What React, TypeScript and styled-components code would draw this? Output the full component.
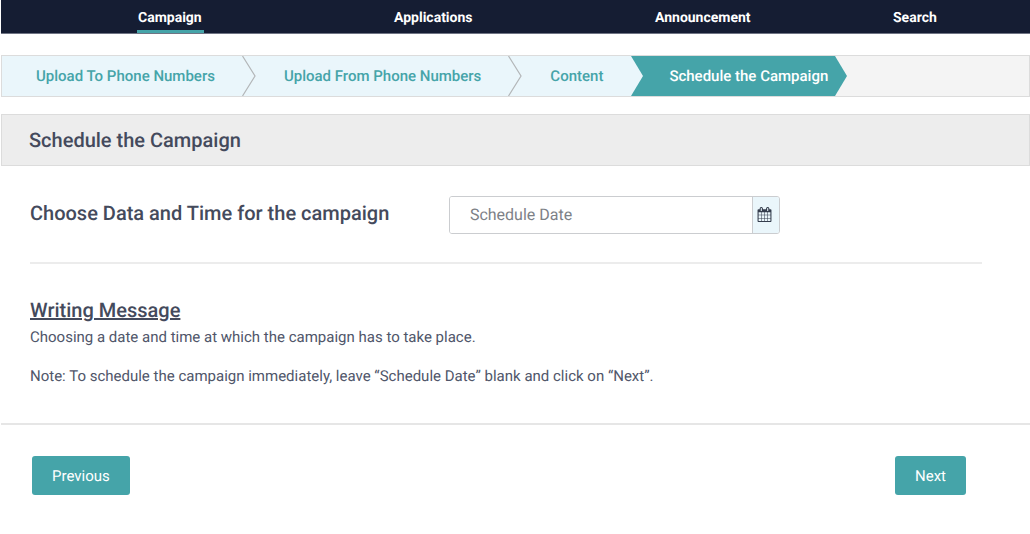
import React from "react";
import styled, { createGlobalStyle } from "styled-components";

const color = {
  navy: "#151d33",
  teal: "#45a4a9",
  ice: "#eaf6fb",
  ink: "#444a5c",
  line: "#dcdcdc",
};

const GlobalStyle = createGlobalStyle`
  *, *::before, *::after { box-sizing: border-box; }
  body {
    margin: 0;
    background: #fff;
    color: ${color.ink};
    font-family: Roboto, "Liberation Sans", sans-serif;
    text-rendering: geometricPrecision;
  }
  button, input { text-rendering: inherit; }
  h1, h2, p { margin: 0; }
`;

const Page = styled.div`
  padding-left: 1px;
`;

const Nav = styled.nav`
  display: grid;
  grid-template-columns: 256fr 261fr 238fr 138fr;
  padding-left: 136px;
  background: ${color.navy};
  border-bottom: 1px solid #6f7484;
`;

const NavLink = styled.a<{ $active?: boolean }>`
  justify-self: start;
  height: 33px;
  padding: 0 2px 0 1px;
  border-bottom: 3px solid ${(p) => (p.$active ? color.teal : "transparent")};
  color: #fff;
  font-size: 14px;
  font-weight: 700;
  line-height: 36px;
  text-decoration: none;
`;

const Steps = styled.ol`
  display: flex;
  height: 42px;
  margin: 21px 0 0;
  padding: 0;
  list-style: none;
  background: #f4f4f4;
  border: 1px solid ${color.line};
`;

const Step = styled.li<{ $active?: boolean }>`
  display: flex;
  background: ${(p) => (p.$active ? color.teal : color.ice)};
`;

const StepLink = styled.a<{ $active?: boolean }>`
  padding: ${(p) => (p.$active ? "0 6px 0 25px" : "0 27px 0 28px")};
  color: ${(p) => (p.$active ? "#fff" : color.teal)};
  font-size: 15px;
  font-weight: 500;
  line-height: 40px;
  text-decoration: none;
  white-space: nowrap;

  ${Step}:first-child & {
    padding-left: 34px;
  }
`;

const Arrow = styled.svg`
  flex: none;
  display: block;
  width: 14px;
  height: 40px;
`;

const TitleBar = styled.header`
  margin-top: 17px;
  padding: 0 27px;
  background: #ededed;
  border: 1px solid ${color.line};
`;

const Title = styled.h1`
  font-size: 20px;
  font-weight: 500;
  line-height: 50px;
`;

const Body = styled.main`
  padding: 30px 48px 37px 29px;
`;

const FieldRow = styled.div`
  display: flex;
  align-items: center;
  padding-bottom: 28px;
  border-bottom: 2px solid #ececec;
`;

const FieldLabel = styled.label`
  flex: 0 0 44%;
  padding-bottom: 4px;
  font-size: 20px;
  font-weight: 500;
  line-height: 24px;
`;

const DateField = styled.div`
  display: flex;
  width: 331px;
  height: 38px;
  overflow: hidden;
  border: 1px solid #cbcdd0;
  border-radius: 3px;
`;

const DateInput = styled.input`
  flex: 1;
  min-width: 0;
  padding: 0 20px 2px;
  border: 0;
  background: #fff;
  color: ${color.ink};
  font: 400 16px Roboto, "Liberation Sans", sans-serif;

  &::placeholder {
    color: #7d8187;
    opacity: 1;
  }
`;

const CalendarButton = styled.button`
  display: flex;
  align-items: center;
  justify-content: center;
  width: 27px;
  padding: 0 2px 2px 0;
  border: 0;
  border-left: 1px solid #cbcdd0;
  background: ${color.ice};
  color: #343d4d;
  cursor: pointer;
`;

const Subtitle = styled.h2`
  margin-top: 34px;
  font-size: 20px;
  font-weight: 500;
  line-height: 24px;
  text-decoration: underline;
`;

const Text = styled.p`
  margin-top: 5px;
  color: #50566a;
  font-size: 15px;
  line-height: 20px;

  & + & {
    margin-top: 19px;
  }
`;

const Footer = styled.footer`
  display: flex;
  justify-content: space-between;
  padding: 31px 64px 40px 31px;
  border-top: 2px solid #e6e6e6;
`;

const Button = styled.button`
  height: 39px;
  padding: 0 20px;
  border: 0;
  border-radius: 3px;
  background: ${color.teal};
  color: #fff;
  font: 400 15px Roboto, "Liberation Sans", sans-serif;
  cursor: pointer;
`;

const CalendarIcon = () => (
  <svg width="15" height="15" viewBox="0 0 1792 1792" fill="currentColor" aria-hidden="true">
    <path d="M192 1664h288v-288h-288v288zm352 0h320v-288h-320v288zm-352-352h288v-320h-288v320zm352 0h320v-320h-320v320zm-352-384h288v-288h-288v288zm736 736h320v-288h-320v288zm-384-736h320v-288h-320v288zm768 736h288v-288h-288v288zm-384-352h320v-320h-320v320zm-352-864v-288q0-13-9.5-22.5t-22.5-9.5h-64q-13 0-22.5 9.5t-9.5 22.5v288q0 13 9.5 22.5t22.5 9.5h64q13 0 22.5-9.5t9.5-22.5zm736 864h288v-320h-288v320zm-384-384h320v-288h-320v288zm384 0h288v-288h-288v288zm32-480v-288q0-13-9.5-22.5t-22.5-9.5h-64q-13 0-22.5 9.5t-9.5 22.5v288q0 13 9.5 22.5t22.5 9.5h64q13 0 22.5-9.5t9.5-22.5zm384-64v1280q0 52-38 90t-90 38h-1408q-52 0-90-38t-38-90v-1280q0-52 38-90t90-38h128v-96q0-66 47-113t113-47h64q66 0 113 47t47 113v96h384v-96q0-66 47-113t113-47h64q66 0 113 47t47 113v96h128q52 0 90 38t38 90z" />
  </svg>
);

const Chevron = () => (
  <Arrow viewBox="0 0 14 40" aria-hidden="true">
    <path d="M0.5 0L13 20L0.5 40" fill="none" stroke="#b3b6b8" strokeWidth="1.2" />
  </Arrow>
);

const Wedge = ({ fill, back }: { fill: string; back: string }) => (
  <Arrow viewBox="0 0 14 40" aria-hidden="true">
    <path d="M0 0H14V40H0z" fill={back} />
    <path d="M0 0H1L13 20L1 40H0z" fill={fill} />
  </Arrow>
);

const navItems = ["Campaign", "Applications", "Announcement", "Search"];
const steps = ["Upload To Phone Numbers", "Upload From Phone Numbers", "Content", "Schedule the Campaign"];

export default function App() {
  const last = steps.length - 1;
  return (
    <>
      <GlobalStyle />
      <Page>
        <Nav>
          {navItems.map((item, i) => (
            <NavLink key={item} href="#" $active={i === 0}>
              {item}
            </NavLink>
          ))}
        </Nav>
        <Steps>
          {steps.map((step, i) => (
            <Step key={step} $active={i === last}>
              <StepLink href="#" $active={i === last} aria-current={i === last ? "step" : undefined}>
                {step}
              </StepLink>
              {i < last - 1 && <Chevron />}
              {i === last - 1 && <Wedge fill={color.ice} back={color.teal} />}
              {i === last && <Wedge fill={color.teal} back="#f4f4f4" />}
            </Step>
          ))}
        </Steps>
        <TitleBar>
          <Title>Schedule the Campaign</Title>
        </TitleBar>
        <Body>
          <FieldRow>
            <FieldLabel htmlFor="schedule-date">Choose Data and Time for the campaign</FieldLabel>
            <DateField>
              <DateInput id="schedule-date" type="text" placeholder="Schedule Date" />
              <CalendarButton type="button" aria-label="Open calendar">
                <CalendarIcon />
              </CalendarButton>
            </DateField>
          </FieldRow>
          <Subtitle>Writing Message</Subtitle>
          <Text>Choosing a date and time at which the campaign has to take place.</Text>
          <Text>Note: To schedule the campaign immediately, leave “Schedule Date” blank and click on “Next”.</Text>
        </Body>
        <Footer>
          <Button type="button">Previous</Button>
          <Button type="button">Next</Button>
        </Footer>
      </Page>
    </>
  );
}
